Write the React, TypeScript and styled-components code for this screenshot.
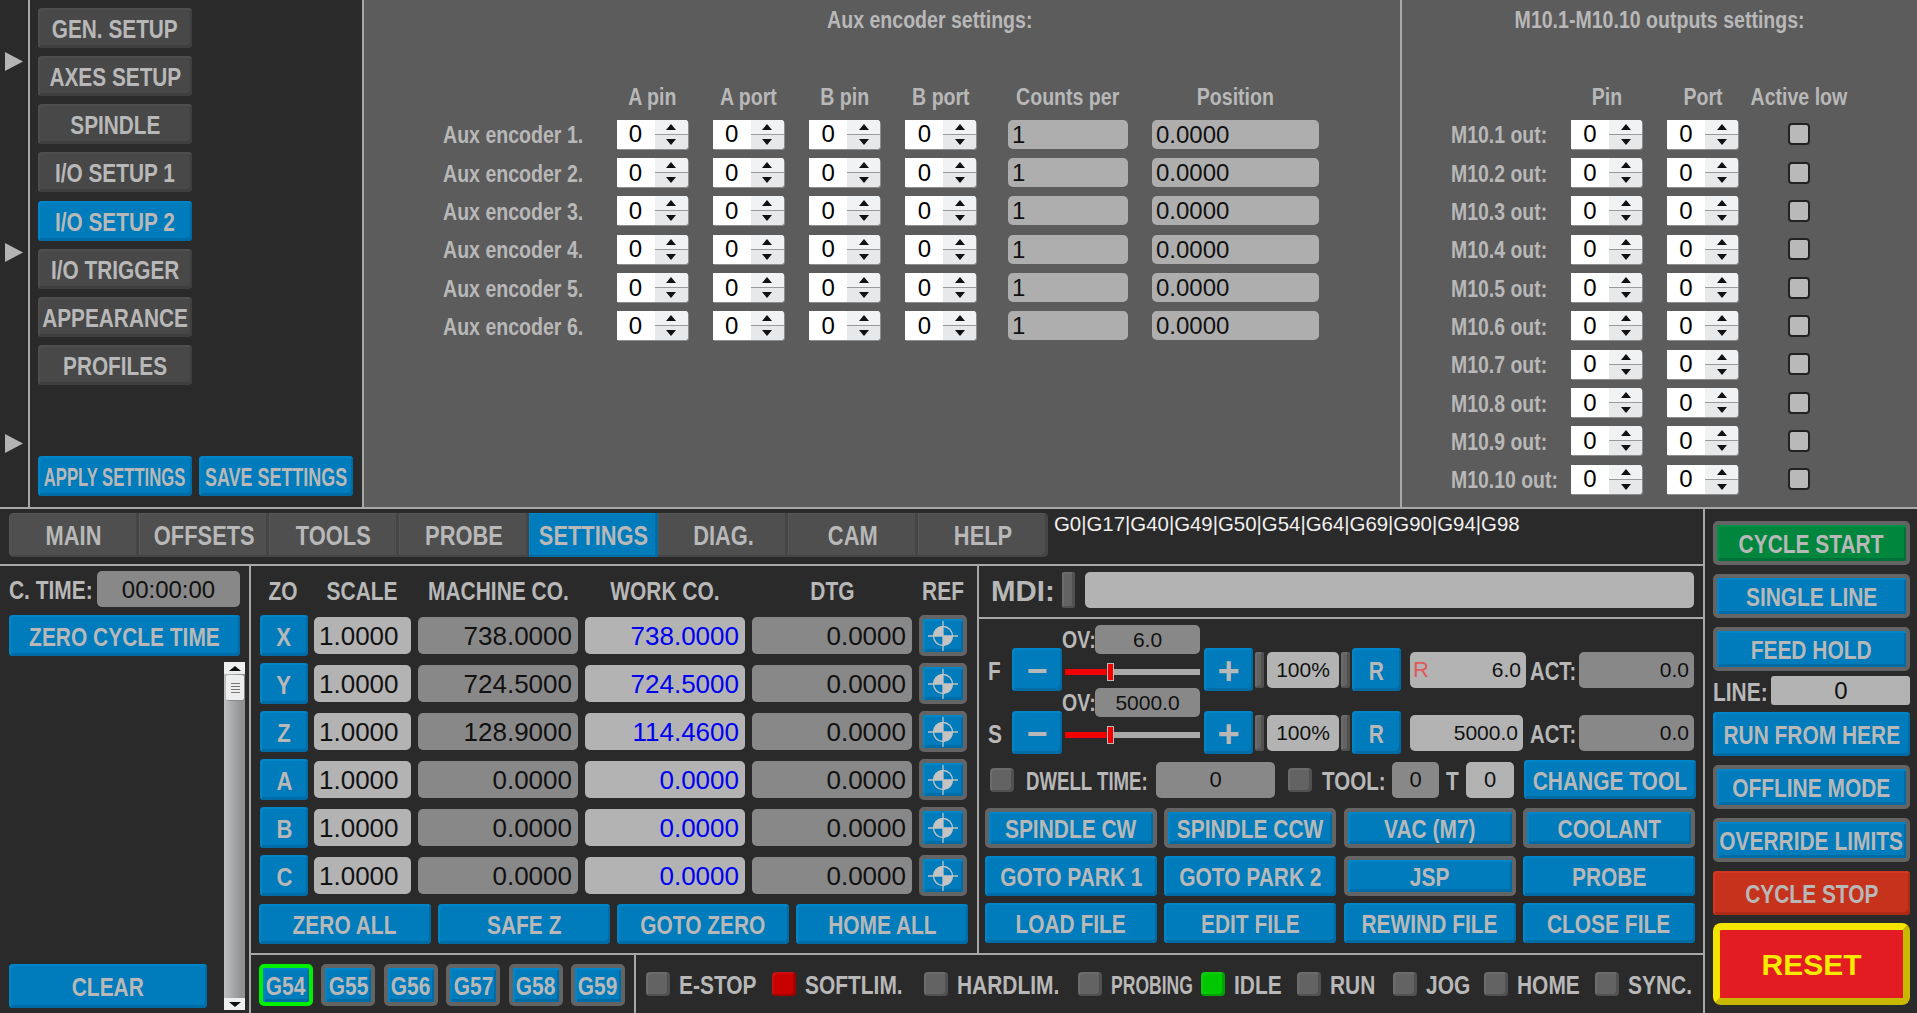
import React from "react";
import styled, { createGlobalStyle } from "styled-components";

const Global = createGlobalStyle`
  html, body { margin: 0; padding: 0; background: #2b2a2a; }
  body { font-family: "Liberation Sans", Arial, sans-serif; overflow: hidden; }
  * { box-sizing: border-box; }
`;

const LINE = "#a8a8a8";
const DARK = "#2b2a2a";
const TXT = "#b8b8b8";

const Root = styled.div`
  width: 1917px;
  height: 1013px;
  background: ${DARK};
  overflow: hidden;
  display: flex;
  flex-direction: column;
`;

/* text condensed like the Qt original */
const Lbl = styled.span<{ $sx?: number; $size?: number; $left?: boolean; $color?: string }>`
  display: inline-block;
  white-space: nowrap;
  font-weight: 700;
  font-size: ${(p) => p.$size ?? 26}px;
  line-height: 1;
  color: ${(p) => p.$color ?? TXT};
  transform: translateY(1px) scaleX(${(p) => p.$sx ?? 0.805});
  transform-origin: ${(p) => (p.$left ? "left center" : "center")};
`;

const Btn = styled.div<{ $framed?: boolean; $frame?: string; $kind?: "blue" | "gray" | "green" | "red" }>`
  display: flex;
  align-items: center;
  justify-content: center;
  border-radius: 4px;
  background: ${(p) =>
    p.$kind === "gray" ? "#484848" : p.$kind === "green" ? "#00873d" : p.$kind === "red" ? "#c7321c" : "#007bbb"};
  ${(p) => (p.$framed || p.$frame ? `border: 4px solid ${p.$frame ?? "#646464"}; border-radius: 5px;` : "")}
  box-shadow: inset 2px 2px 0 ${(p) =>
    p.$kind === "gray" ? "#4e4e4e" : p.$kind === "green" ? "#009345" : p.$kind === "red" ? "#d2381f" : "#0085c8"},
    inset -2px -3px 0 ${(p) =>
    p.$kind === "gray" ? "#3f3f3f" : p.$kind === "green" ? "#00713a" : p.$kind === "red" ? "#ad2a16" : "#006ca6"};
`;

const Field = styled.div<{ $tone?: "light" | "dark"; $align?: "left" | "right" | "center"; $size?: number; $color?: string }>`
  display: flex;
  flex: none;
  align-items: center;
  justify-content: ${(p) => (p.$align === "right" ? "flex-end" : p.$align === "left" ? "flex-start" : "center")};
  padding: 1px 6px 0;
  border-radius: 5px;
  background: ${(p) => (p.$tone === "dark" ? "#888888" : "#b3b3b3")};
  color: ${(p) => p.$color ?? "#111"};
  font-size: ${(p) => p.$size ?? 26}px;
  white-space: nowrap;
`;

const Led = styled.div<{ $color?: string; $w?: number; $h?: number }>`
  width: ${(p) => p.$w ?? 24}px;
  height: ${(p) => p.$h ?? 24}px;
  flex: none;
  border-radius: 4px;
  background: ${(p) => p.$color ?? "#636363"};
  box-shadow: inset -3px -2px 0 rgba(0, 0, 0, 0.18), inset 2px 2px 0 rgba(255, 255, 255, 0.06);
`;

/* ---------- top ---------- */
const Top = styled.div`
  height: 509px;
  flex: none;
  display: flex;
  border-bottom: 2px solid ${LINE};
`;
const ArrowRail = styled.div`
  width: 30px;
  flex: none;
  border-right: 2px solid ${LINE};
  padding: 52px 0 0 5px;
  display: flex;
  flex-direction: column;
  gap: 172px;
`;
const Arrow = styled.svg`
  width: 18px;
  height: 19px;
  display: block;
`;
const Menu = styled.div`
  width: 334px;
  flex: none;
  border-right: 2px solid ${LINE};
  padding: 8px 0 11px 8px;
  display: flex;
  flex-direction: column;
`;
const MenuList = styled.div`
  display: flex;
  flex-direction: column;
  gap: 8.14px;
`;
const MenuBtn = styled(Btn)`
  width: 154px;
  height: 40px;
`;
const MenuFoot = styled.div`
  margin-top: auto;
  display: flex;
  gap: 7px;
`;
const AuxPanel = styled.div`
  width: 1038px;
  flex: none;
  border-right: 2px solid ${LINE};
  background: #5c5c5c;
`;
const M10Panel = styled.div`
  flex: 1;
  background: #5c5c5c;
`;
const Title = styled.div<{ $pl?: number }>`
  height: 38px;
  padding-left: ${(p) => p.$pl ?? 0}px;
  display: flex;
  align-items: center;
  justify-content: center;
`;
const SetGrid = styled.div<{ $cols: string; $pl: number }>`
  margin-top: 43.5px;
  padding-left: ${(p) => p.$pl}px;
  display: grid;
  grid-template-columns: ${(p) => p.$cols};
  grid-auto-rows: 29px;
  row-gap: 9.33px;
  align-items: center;
`;
const HeadCell = styled.div<{ $w?: number; $ml?: number }>`
  width: ${(p) => p.$w ?? 71}px;
  margin-left: ${(p) => p.$ml ?? 0}px;
  display: flex;
  justify-content: center;
`;
const Spin = styled.div<{ $w?: number }>`
  width: ${(p) => p.$w ?? 71}px;
  height: 29px;
  display: flex;
  border-radius: 0 3px 3px 0;
  box-shadow: 1px 1px 0 #8d8d8d;
`;
const SpinVal = styled.div`
  flex: 1;
  background: #fff;
  color: #000;
  font-size: 24px;
  display: flex;
  align-items: center;
  justify-content: center;
`;
const SpinBtns = styled.div`
  width: 33px;
  flex: none;
  display: flex;
  flex-direction: column;
  border-radius: 0 3px 3px 0;
  overflow: hidden;
  background: #e4e6e8;
`;
const SpinBtn = styled.div<{ $down?: boolean }>`
  flex: 1;
  display: flex;
  align-items: center;
  justify-content: center;
  background: ${(p) => (p.$down ? "#e6e8ea" : "#f1f2f3")};
  ${(p) => (p.$down ? "border-top: 1px solid #9a9a9a;" : "")}
  &::after {
    content: "";
    width: 0;
    height: 0;
    border-left: 5px solid transparent;
    border-right: 5px solid transparent;
    ${(p) => (p.$down ? "border-top: 6px solid #111;" : "border-bottom: 6px solid #111;")}
  }
`;
const ValBox = styled(Field)<{ $w: number; $ml?: number }>`
  width: ${(p) => p.$w}px;
  height: 29px;
  margin-left: ${(p) => p.$ml ?? 0}px;
  background: #aeaeae;
  padding: 1px 4px 0;
  color: #111;
  font-size: 24px;
`;
const Check = styled.div`
  width: 22px;
  height: 22px;
  justify-self: center;
  border-radius: 4px;
  background: #b9b9b9;
  border: 2px solid #222;
`;

const SpinBox = () => (
  <Spin>
    <SpinVal>0</SpinVal>
    <SpinBtns>
      <SpinBtn />
      <SpinBtn $down />
    </SpinBtns>
  </Spin>
);

/* ---------- bottom ---------- */
const Bottom = styled.div`
  flex: 1;
  display: flex;
  min-height: 0;
`;
const LeftCol = styled.div`
  width: 1705px;
  flex: none;
  border-right: 2px solid ${LINE};
  display: flex;
  flex-direction: column;
`;
const TabRow = styled.div`
  height: 57px;
  flex: none;
  border-bottom: 2px solid ${LINE};
  padding: 4px 0 0 9px;
  display: flex;
`;
const Tabs = styled.div`
  display: flex;
  height: 44px;
  width: 1039px;
  flex: none;
`;
const Tab = styled.div<{ $on?: boolean }>`
  flex: 1 1 0;
  min-width: 0;
  display: flex;
  align-items: center;
  justify-content: center;
  background: ${(p) => (p.$on ? "#007bbb" : "#4f4f4f")};
  box-shadow: inset -3px -2px 0 ${(p) => (p.$on ? "#006ca6" : "#454545")},
    inset 1px 1px 0 ${(p) => (p.$on ? "#0085c8" : "#565656")};
  &:first-child {
    border-radius: 5px 0 0 5px;
  }
  &:last-child {
    border-radius: 0 5px 5px 0;
  }
`;
const Modal = styled.div`
  margin-left: 6px;
  padding-top: 1px;
  color: #f0f0f0;
  font-size: 20.4px;
  line-height: 21px;
`;
const Body = styled.div`
  flex: 1;
  display: flex;
  min-height: 0;
`;
const CyclePanel = styled.div`
  width: 251px;
  flex: none;
  border-right: 2px solid ${LINE};
  padding: 5px 0 0 9px;
  display: flex;
  flex-direction: column;
`;
const TimeRow = styled.div`
  display: grid;
  grid-template-columns: 88px 143px;
  height: 36px;
  align-items: center;
`;
const TimeField = styled(Field)`
  height: 36px;
`;
const ZeroBtn = styled(Btn)`
  width: 231px;
  height: 41px;
  margin-top: 8px;
`;
const ListArea = styled.div`
  margin-top: 6px;
  height: 348px;
  display: flex;
  justify-content: space-between;
  width: 236px;
`;
const ClearBtn = styled(Btn)`
  width: 198px;
  height: 44px;
  align-self: flex-end;
  margin-bottom: 2px;
`;
const ScrollBar = styled.div`
  width: 21px;
  display: flex;
  flex-direction: column;
  background: linear-gradient(90deg, #bfc1c2, #8f9091 85%);
`;
const ScrollEnd = styled.div<{ $down?: boolean }>`
  height: 12px;
  background: #eef0f0;
  display: flex;
  align-items: center;
  justify-content: center;
  &::after {
    content: "";
    width: 0;
    height: 0;
    border-left: 6px solid transparent;
    border-right: 6px solid transparent;
    ${(p) => (p.$down ? "border-top: 5px solid #111;" : "border-bottom: 5px solid #111;")}
  }
`;
const ScrollThumb = styled.div`
  margin: 1px 1px 0 2px;
  height: 25px;
  background: #eeeeee;
  border-radius: 2px;
  box-shadow: 1px 1px 0 #888;
  display: flex;
  flex-direction: column;
  gap: 2px;
  align-items: center;
  justify-content: center;
  & > i {
    width: 9px;
    height: 1px;
    background: #777;
  }
`;
const ScrollFill = styled.div`
  flex: 1;
`;
const Center = styled.div`
  flex: 1;
  display: flex;
  flex-direction: column;
  min-width: 0;
`;
const Mid = styled.div`
  height: 389px;
  flex: none;
  display: flex;
  border-bottom: 2px solid ${LINE};
`;
const AxisPanel = styled.div`
  width: 728px;
  flex: none;
  border-right: 2px solid ${LINE};
  padding: 5px 0 0 8px;
`;
const AxisGrid = styled.div`
  margin-left: 1px;
  display: grid;
  grid-template-columns: 47px 97px 160px 160px 160px 48px;
  column-gap: 7px;
  row-gap: 7px;
  grid-template-rows: 37px repeat(6, 41px);
  align-items: center;
`;
const ColHead = styled.div`
  display: flex;
  justify-content: center;
`;
const AxisBtn = styled(Btn)`
  width: 48px;
  height: 41px;
`;
const AxisField = styled(Field)`
  height: 37px;
  padding: 1px 6px 0 5px;
`;
const RefBtn = styled(Btn)`
  width: 48px;
  height: 41px;
`;
const AxisFoot = styled.div`
  margin-top: 8px;
  display: flex;
  gap: 7px;
`;
const AxisFootBtn = styled(Btn)`
  width: 172px;
  height: 40px;
`;
const Control = styled.div`
  flex: 1;
  display: flex;
  flex-direction: column;
`;
const MdiRow = styled.div`
  height: 53px;
  flex: none;
  border-bottom: 2px solid ${LINE};
  padding: 0 0 4px 12px;
  display: flex;
  align-items: center;
`;
const MdiField = styled(Field)`
  width: 609px;
  height: 36px;
  margin-left: 10px;
`;
const MdiWrap = styled.div`
  width: 64px;
  margin-right: 7px;
`;
const FeedArea = styled.div`
  padding: 6px 0 0 9px;
`;
const FeedRow = styled.div<{ $second?: boolean }>`
  display: grid;
  grid-template-columns: 24px 50px 142px 51px 12px 74px 11px 58px 120px 49px 115px;
  grid-template-rows: 23px 43px;
  ${(p) => (p.$second ? "margin-top: -3px;" : "")}
  align-items: center;
  justify-items: start;
  & > * {
    grid-row: 2;
  }
`;
const CenterCol = styled.div`
  grid-row: 1 / span 2 !important;
  align-self: start;
  width: 138px;
`;
const OvRow = styled.div`
  display: grid;
  grid-template-columns: 33px 105px;
  align-items: center;
  height: 29px;
`;
const OvField = styled(Field)`
  height: 29px;
  font-size: 21px;
`;
const Slider = styled.div`
  position: relative;
  width: 135px;
  height: 6px;
  margin: 15px 0 0 3px;
  background: #a9a9a9;
`;
const SliderFill = styled.div`
  position: absolute;
  inset: 0 auto 0 0;
  width: 43px;
  background: #f00000;
`;
const SliderKnob = styled.div`
  position: absolute;
  left: 43px;
  top: -5px;
  width: 5px;
  height: 16px;
  background: #f00000;
  box-shadow: 0 0 0 1px #b9b9b9;
`;
const PmBtn = styled(Btn)<{ $w?: number }>`
  height: 43px;
  width: ${(p) => p.$w ?? 50}px;
`;
const Bar = styled(Led)`
  border-radius: 2px;
`;
const SmallField = styled(Field)<{ $w: number }>`
  width: ${(p) => p.$w}px;
  height: 36px;
  font-size: 21px;
  padding: 1px 5px 0;
`;
const RedR = styled.span`
  margin-right: auto;
  margin-left: -2px;
  font-size: 22px;
  color: #df5a5a;
`;
const DwellRow = styled.div`
  margin: 6px 0 0 11px;
  height: 39px;
  display: grid;
  grid-template-columns: 36px 130px 132px 34px 70px 54px 20px 58px 172px;
  align-items: center;
  justify-items: start;
`;
const DwellField = styled(Field)<{ $w: number }>`
  width: ${(p) => p.$w}px;
  height: 36px;
  font-size: 22px;
  padding: 1px 0 0;
`;
const ChangeBtn = styled(Btn)`
  width: 172px;
  height: 39px;
`;
const ActionGrid = styled.div`
  margin: 9px 0 0 6px;
  display: grid;
  grid-template-columns: repeat(4, 172px);
  column-gap: 7.33px;
  grid-auto-rows: 40px;
  row-gap: 7.5px;
`;
const Foot = styled.div`
  flex: 1;
  display: flex;
`;
const GroupBox = styled.div`
  width: 385px;
  flex: none;
  border-right: 2px solid ${LINE};
  padding: 9px 0 0 8px;
  display: flex;
  gap: 8.4px;
`;
const GBtn = styled(Btn)`
  width: 54px;
  height: 42px;
`;
const StatusBar = styled.div`
  flex: 1;
  padding: 17px 0 0 10px;
  display: flex;
`;
const StatusItem = styled.div<{ $w: number; $gap?: number }>`
  width: ${(p) => p.$w}px;
  flex: none;
  height: 24px;
  display: flex;
  align-items: center;
  gap: ${(p) => p.$gap ?? 9}px;
`;
const RightCol = styled.div`
  flex: 1;
  padding: 12px 0 0 8px;
  display: flex;
  flex-direction: column;
  gap: 8.8px;
`;
const SideBtn = styled(Btn)`
  width: 197px;
  height: 44px;
`;
const LineRow = styled.div`
  margin: -3px 0 -2px;
  height: 29px;
  display: grid;
  grid-template-columns: 58px 139px;
  align-items: center;
`;
const LineField = styled(Field)`
  height: 29px;
  font-size: 24px;
  padding: 0 0 0 1px;
  border-radius: 3px;
`;
const ResetBtn = styled.div`
  width: 197px;
  height: 82px;
  border-radius: 8px;
  border: 7px solid;
  border-color: #f5e400 #c9b800 #c9b800 #f5e400;
  background: #e31b23;
  display: flex;
  align-items: center;
  justify-content: center;
`;

const AUX = [1, 2, 3, 4, 5, 6];
const M10 = [1, 2, 3, 4, 5, 6, 7, 8, 9, 10];
const AXES = [
  ["X", "738.0000", "738.0000"],
  ["Y", "724.5000", "724.5000"],
  ["Z", "128.9000", "114.4600"],
  ["A", "0.0000", "0.0000"],
  ["B", "0.0000", "0.0000"],
  ["C", "0.0000", "0.0000"],
];
const RefIcon = () => (
  <svg width="30" height="30" viewBox="0 0 30 30">
    <circle cx="15" cy="15" r="9.5" fill="none" stroke="#c4c4c4" strokeWidth="1.3" />
    <path d="M15 15V5.5A9.5 9.5 0 0 0 5.5 15Z" fill="#c4c4c4" />
    <path d="M15 15v9.5A9.5 9.5 0 0 0 24.5 15Z" fill="#c4c4c4" />
    <path d="M15 0v30M0 15h30" stroke="#c4c4c4" strokeWidth="1.3" />
  </svg>
);
const Tri = () => (
  <Arrow viewBox="0 0 18 19">
    <path d="M0 0L18 9.5L0 19Z" fill="#b4b4b4" />
  </Arrow>
);

const Sliders = () => (
  <Slider>
    <SliderFill />
    <SliderKnob />
  </Slider>
);

function FeedLine({ name, ov, val, second, w }: { name: string; ov: string; val: React.ReactNode; second?: boolean; w: number }) {
  return (
    <FeedRow $second={second}>
      <Lbl $left>{name}</Lbl>
      <PmBtn>
        <Lbl $size={36} $sx={1}>−</Lbl>
      </PmBtn>
      <CenterCol>
        <OvRow>
          <Lbl $size={23} $sx={0.85} $left>OV:</Lbl>
          <OvField $tone="dark">{ov}</OvField>
        </OvRow>
        <Sliders />
      </CenterCol>
      <PmBtn $w={49}>
        <Lbl $size={38} $sx={1}>+</Lbl>
      </PmBtn>
      <Bar $w={9} $h={36} />
      <SmallField $w={72}>100%</SmallField>
      <Bar $w={9} $h={36} />
      <PmBtn $w={49}>
        <Lbl>R</Lbl>
      </PmBtn>
      <SmallField $w={w} $align="right">{val}</SmallField>
      <Lbl $sx={0.78} $left>ACT:</Lbl>
      <SmallField $w={115} $tone="dark" $align="right">0.0</SmallField>
    </FeedRow>
  );
}

const ACTIONS: [string, boolean, number?][] = [
  ["SPINDLE CW", true],
  ["SPINDLE CCW", true],
  ["VAC (M7)", true],
  ["COOLANT", true],
  ["GOTO PARK 1", false],
  ["GOTO PARK 2", false],
  ["JSP", true],
  ["PROBE", false],
  ["LOAD FILE", false],
  ["EDIT FILE", false],
  ["REWIND FILE", false],
  ["CLOSE FILE", false],
];

const STATUS: [string, number, string?, number?][] = [
  ["E-STOP", 126],
  ["SOFTLIM.", 152, "#c80000"],
  ["HARDLIM.", 154],
  ["PROBING", 123, undefined, 0.675],
  ["IDLE", 96, "#00c800"],
  ["RUN", 96],
  ["JOG", 91],
  ["HOME", 111],
  ["SYNC.", 85],
];

export default function App() {
  return (
    <Root>
      <Global />
      <Top>
        <ArrowRail>
          <Tri />
          <Tri />
          <Tri />
        </ArrowRail>
        <Menu>
          <MenuList>
            {["GEN. SETUP", "AXES SETUP", "SPINDLE", "I/O SETUP 1", "I/O SETUP 2", "I/O TRIGGER", "APPEARANCE", "PROFILES"].map((m) => (
              <MenuBtn key={m} $kind={m === "I/O SETUP 2" ? "blue" : "gray"}>
                <Lbl $sx={0.8}>{m}</Lbl>
              </MenuBtn>
            ))}
          </MenuList>
          <MenuFoot>
            <MenuBtn>
              <Lbl $sx={0.64}>APPLY SETTINGS</Lbl>
            </MenuBtn>
            <MenuBtn>
              <Lbl $sx={0.69}>SAVE SETTINGS</Lbl>
            </MenuBtn>
          </MenuFoot>
        </Menu>
        <AuxPanel>
          <Title $pl={96}>
            <Lbl $size={23} $sx={0.85}>Aux encoder settings:</Lbl>
          </Title>
          <SetGrid $pl={79} $cols="173.5px 96.3px 96.3px 96.3px 96.3px 150.3px 167px">
            <span />
            {["A pin", "A port", "B pin", "B port"].map((h) => (
              <HeadCell key={h}>
                <Lbl $size={23} $sx={0.85}>{h}</Lbl>
              </HeadCell>
            ))}
            <HeadCell $w={120} $ml={6.3}>
              <Lbl $size={23} $sx={0.85}>Counts per</Lbl>
            </HeadCell>
            <HeadCell $w={167}>
              <Lbl $size={23} $sx={0.85}>Position</Lbl>
            </HeadCell>
            {AUX.map((n) => (
              <React.Fragment key={n}>
                <Lbl $size={24} $sx={0.815} $left>{`Aux encoder ${n}.`}</Lbl>
                <SpinBox />
                <SpinBox />
                <SpinBox />
                <SpinBox />
                <ValBox $w={120} $ml={6.3} $align="left">1</ValBox>
                <ValBox $w={167} $align="left">0.0000</ValBox>
              </React.Fragment>
            ))}
          </SetGrid>
        </AuxPanel>
        <M10Panel>
          <Title>
            <Lbl $size={23} $sx={0.85}>M10.1-M10.10 outputs settings:</Lbl>
          </Title>
          <SetGrid $pl={49} $cols="120px 96px 70px 124px">
            <span />
            <HeadCell>
              <Lbl $size={23} $sx={0.85}>Pin</Lbl>
            </HeadCell>
            <HeadCell>
              <Lbl $size={23} $sx={0.85}>Port</Lbl>
            </HeadCell>
            <HeadCell $w={124}>
              <Lbl $size={23} $sx={0.85}>Active low</Lbl>
            </HeadCell>
            {M10.map((n) => (
              <React.Fragment key={n}>
                <Lbl $size={24} $sx={0.81} $left>{`M10.${n} out:`}</Lbl>
                <SpinBox />
                <SpinBox />
                <Check />
              </React.Fragment>
            ))}
          </SetGrid>
        </M10Panel>
      </Top>
      <Bottom>
        <LeftCol>
          <TabRow>
            <Tabs>
              {["MAIN", "OFFSETS", "TOOLS", "PROBE", "SETTINGS", "DIAG.", "CAM", "HELP"].map((t) => (
                <Tab key={t} $on={t === "SETTINGS"}>
                  <Lbl $size={27} $sx={0.81}>{t}</Lbl>
                </Tab>
              ))}
            </Tabs>
            <Modal>G0|G17|G40|G49|G50|G54|G64|G69|G90|G94|G98</Modal>
          </TabRow>
          <Body>
            <CyclePanel>
              <TimeRow>
                <Lbl $left>C. TIME:</Lbl>
                <TimeField $tone="dark" $size={24}>00:00:00</TimeField>
              </TimeRow>
              <ZeroBtn>
                <Lbl>ZERO CYCLE TIME</Lbl>
              </ZeroBtn>
              <ListArea>
                <ClearBtn>
                  <Lbl>CLEAR</Lbl>
                </ClearBtn>
                <ScrollBar>
                  <ScrollEnd />
                  <ScrollThumb>
                    <i />
                    <i />
                    <i />
                    <i />
                  </ScrollThumb>
                  <ScrollFill />
                  <ScrollEnd $down />
                </ScrollBar>
              </ListArea>
            </CyclePanel>
            <Center>
              <Mid>
                <AxisPanel>
                  <AxisGrid>
                    {["ZO", "SCALE", "MACHINE CO.", "WORK CO.", "DTG", "REF"].map((h) => (
                      <ColHead key={h}>
                        <Lbl>{h}</Lbl>
                      </ColHead>
                    ))}
                    {AXES.map(([a, m, w]) => (
                      <React.Fragment key={a}>
                        <AxisBtn>
                          <Lbl $sx={0.85}>{a}</Lbl>
                        </AxisBtn>
                        <AxisField $align="left">1.0000</AxisField>
                        <AxisField $tone="dark" $align="right">{m}</AxisField>
                        <AxisField $align="right" $color="#0000f0">{w}</AxisField>
                        <AxisField $tone="dark" $align="right">0.0000</AxisField>
                        <RefBtn $framed>
                          <RefIcon />
                        </RefBtn>
                      </React.Fragment>
                    ))}
                  </AxisGrid>
                  <AxisFoot>
                    {["ZERO ALL", "SAFE Z", "GOTO ZERO", "HOME ALL"].map((b) => (
                      <AxisFootBtn key={b}>
                        <Lbl>{b}</Lbl>
                      </AxisFootBtn>
                    ))}
                  </AxisFoot>
                </AxisPanel>
                <Control>
                  <MdiRow>
                    <MdiWrap>
                      <Lbl $size={30} $sx={0.98} $left>MDI:</Lbl>
                    </MdiWrap>
                    <Bar $w={13} $h={36} />
                    <MdiField />
                  </MdiRow>
                  <FeedArea>
                    <FeedLine
                      name="F"
                      ov="6.0"
                      w={116}
                      val={
                        <>
                          <RedR>R</RedR>6.0
                        </>
                      }
                    />
                    <FeedLine name="S" ov="5000.0" w={113} val="5000.0" second />
                  </FeedArea>
                  <DwellRow>
                    <Led />
                    <Lbl $sx={0.716} $left>DWELL TIME:</Lbl>
                    <DwellField $w={119} $tone="dark">0</DwellField>
                    <Led />
                    <Lbl $sx={0.79} $left>TOOL:</Lbl>
                    <DwellField $w={47} $tone="dark">0</DwellField>
                    <Lbl $left>T</Lbl>
                    <DwellField $w={48}>0</DwellField>
                    <ChangeBtn>
                      <Lbl>CHANGE TOOL</Lbl>
                    </ChangeBtn>
                  </DwellRow>
                  <ActionGrid>
                    {ACTIONS.map(([t, f, sx]) => (
                      <Btn key={t} $framed={f}>
                        <Lbl $sx={sx}>{t}</Lbl>
                      </Btn>
                    ))}
                  </ActionGrid>
                </Control>
              </Mid>
              <Foot>
                <GroupBox>
                  {["G54", "G55", "G56", "G57", "G58", "G59"].map((g) => (
                    <GBtn key={g} $frame={g === "G54" ? "#00f000" : "#646464"}>
                      <Lbl>{g}</Lbl>
                    </GBtn>
                  ))}
                </GroupBox>
                <StatusBar>
                  {STATUS.map(([t, w, c, sx]) => (
                    <StatusItem key={t} $w={w}>
                      <Led $color={c} />
                      <Lbl $left $sx={sx}>{t}</Lbl>
                    </StatusItem>
                  ))}
                </StatusBar>
              </Foot>
            </Center>
          </Body>
        </LeftCol>
        <RightCol>
          <SideBtn $kind="green" $framed>
            <Lbl>CYCLE START</Lbl>
          </SideBtn>
          <SideBtn $framed>
            <Lbl>SINGLE LINE</Lbl>
          </SideBtn>
          <SideBtn $framed>
            <Lbl>FEED HOLD</Lbl>
          </SideBtn>
          <LineRow>
            <Lbl $left>LINE:</Lbl>
            <LineField>0</LineField>
          </LineRow>
          <SideBtn>
            <Lbl>RUN FROM HERE</Lbl>
          </SideBtn>
          <SideBtn $framed>
            <Lbl>OFFLINE MODE</Lbl>
          </SideBtn>
          <SideBtn $framed>
            <Lbl>OVERRIDE LIMITS</Lbl>
          </SideBtn>
          <SideBtn $kind="red">
            <Lbl>CYCLE STOP</Lbl>
          </SideBtn>
          <ResetBtn>
            <Lbl $size={30} $sx={1} $color="#f7ea00">RESET</Lbl>
          </ResetBtn>
        </RightCol>
      </Bottom>
    </Root>
  );
}
